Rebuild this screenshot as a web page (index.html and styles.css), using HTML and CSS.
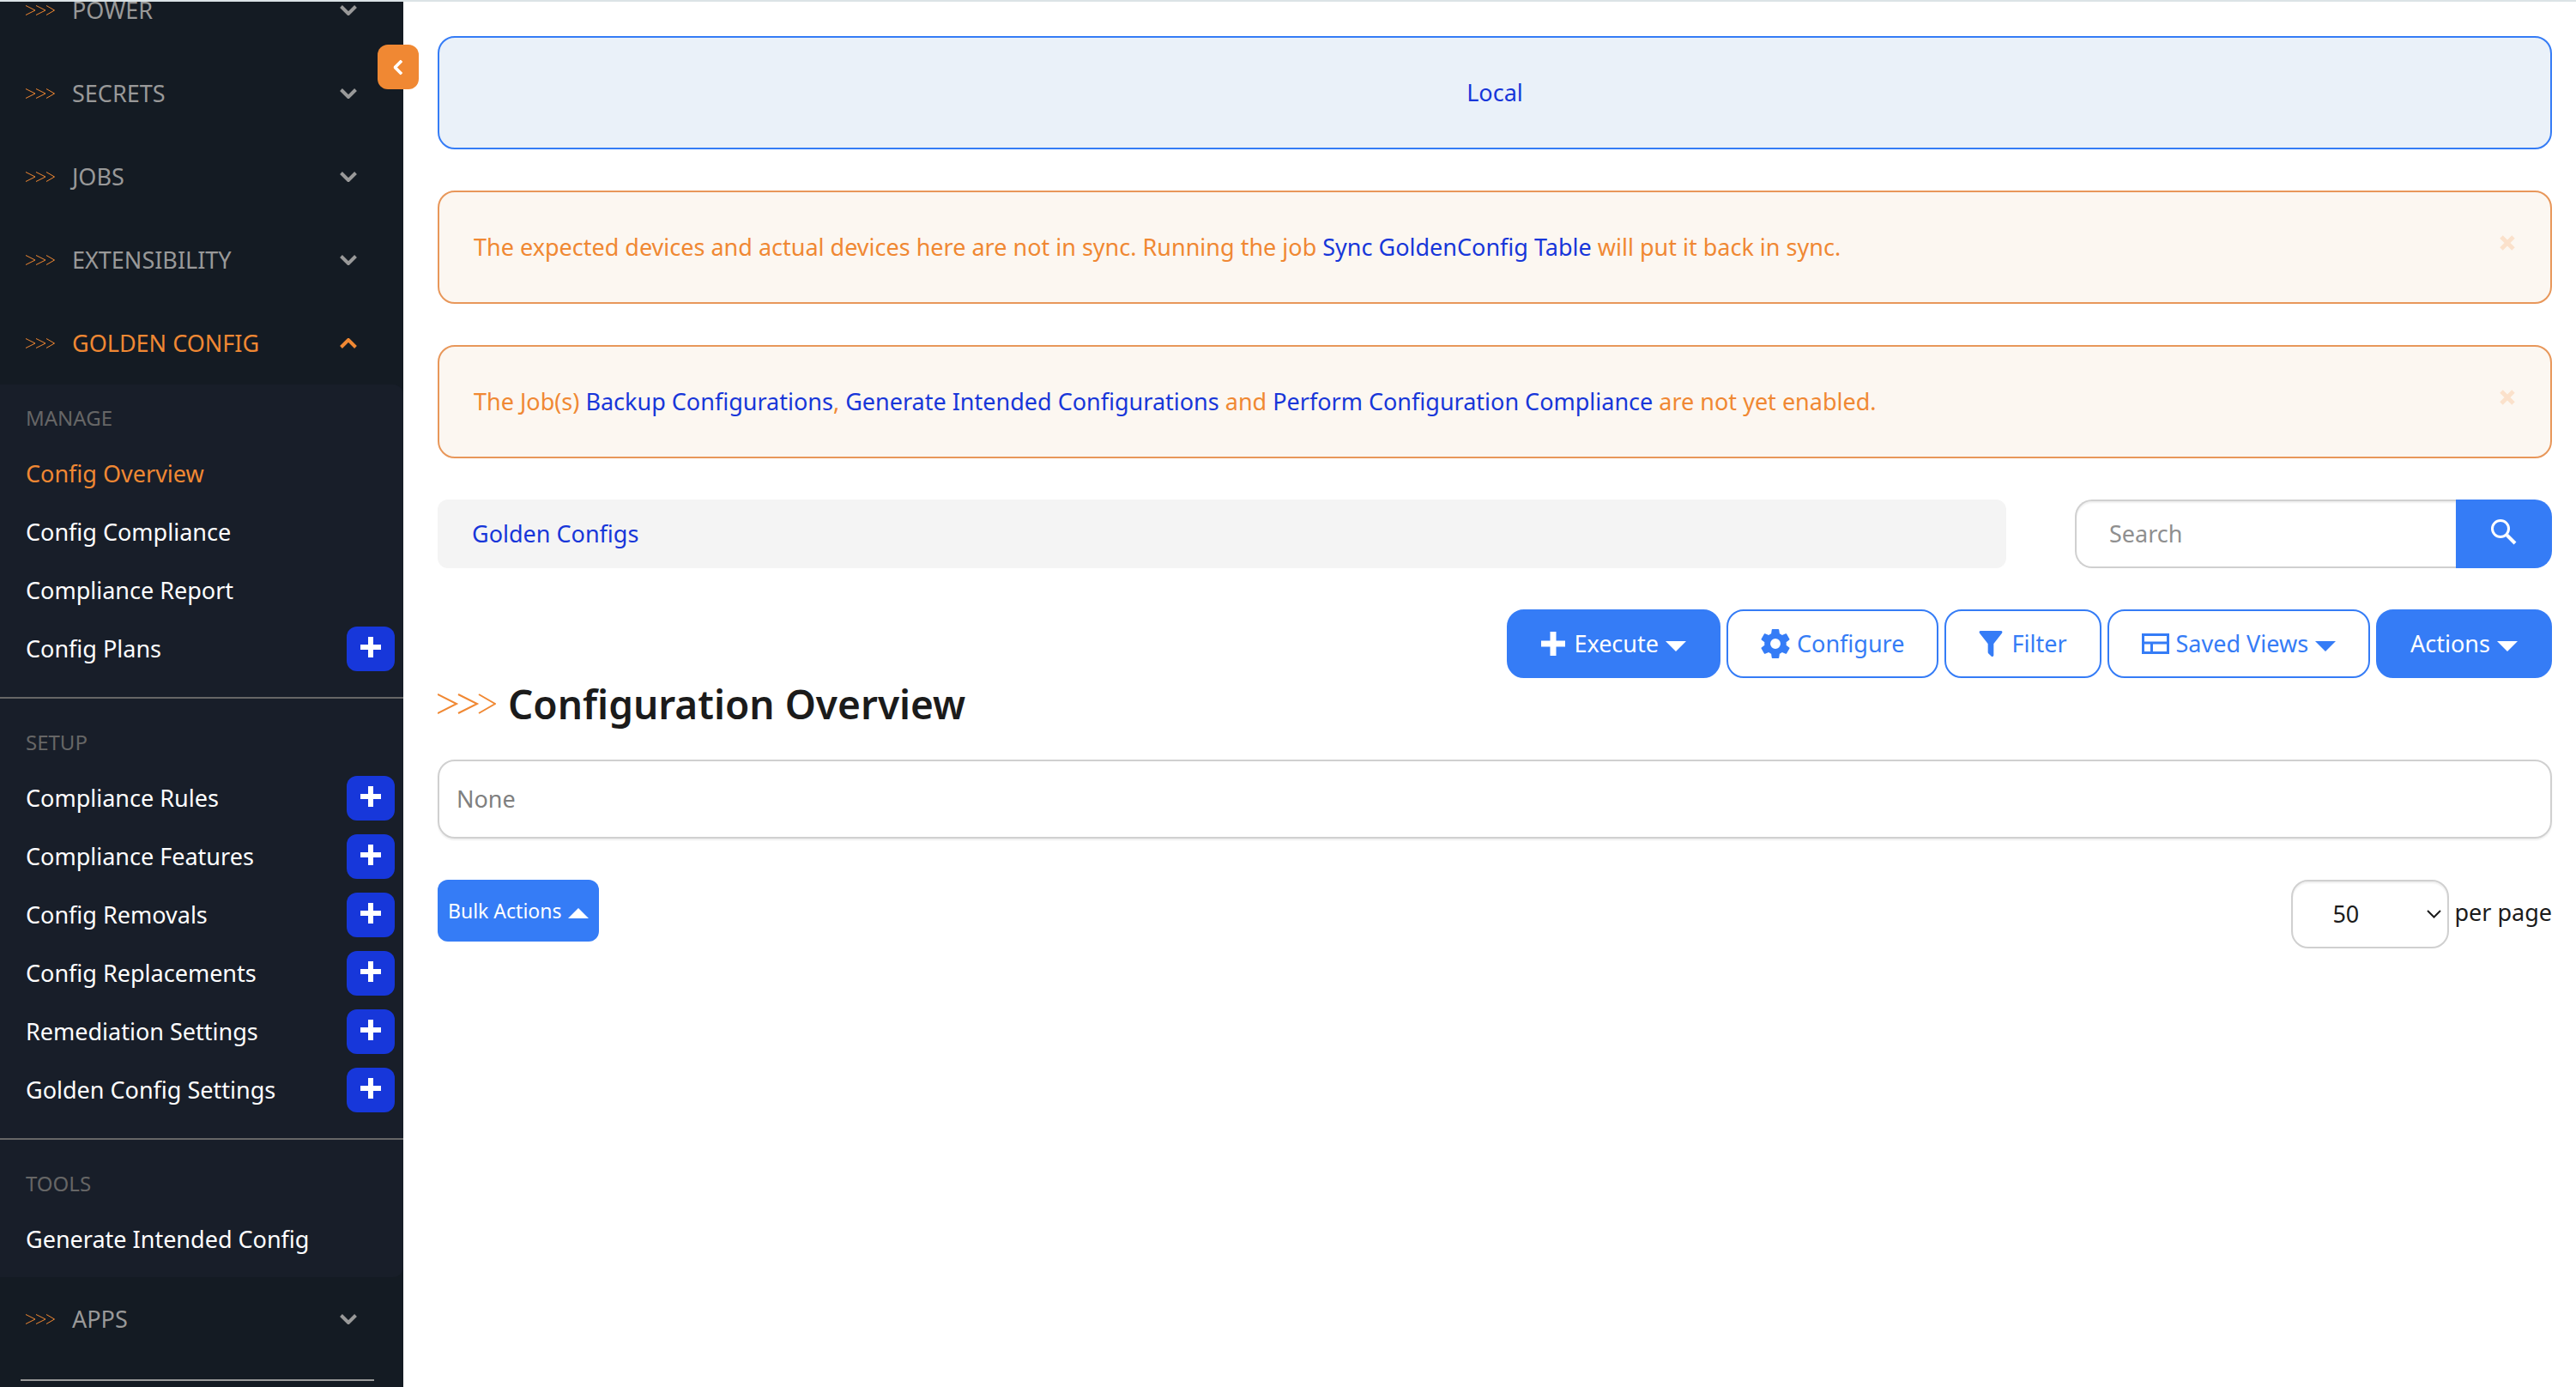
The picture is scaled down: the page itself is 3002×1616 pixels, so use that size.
FILE: index.html
```html
<!DOCTYPE html>
<html lang="en">
<head>
<meta charset="utf-8">
<title>Configuration Overview</title>
<link rel="stylesheet" href="styles.css">
</head>
<body>
<svg class="sprite" aria-hidden="true">
  <symbol id="arrows" viewBox="0 0 68 24"><path d="M0 1 22 12 0 23M24 1 46 12 24 23M48 1 67 12 48 23" fill="none" stroke="currentColor" stroke-width="2"/></symbol>
  <symbol id="chevron" viewBox="0 0 20 12"><path d="M1.500 1.500 10 10 18.500 1.500" fill="none" stroke="currentColor" stroke-width="4"/></symbol>
  <symbol id="chevron-thin" viewBox="0 0 17 10"><path d="M1 1 8.500 8.500 16 1" fill="none" stroke="currentColor" stroke-width="2"/></symbol>
  <symbol id="plus" viewBox="0 0 24 24"><path d="M9 0h6v9h9v6h-9v9H9v-9H0V9h9z" fill="currentColor"/></symbol>
  <symbol id="caret" viewBox="0 0 24 12"><path d="M0 0h24L12 12z" fill="currentColor"/></symbol>
  <symbol id="cog" viewBox="2 2 20 20"><path fill="currentColor" d="M12 15.500A3.500 3.500 0 0 1 8.500 12 3.500 3.500 0 0 1 12 8.500a3.500 3.500 0 0 1 3.500 3.500 3.500 3.500 0 0 1-3.500 3.500m7.430-2.530c.04-.32.07-.64.07-.97s-.03-.66-.07-1l2.110-1.630c.19-.15.24-.42.12-.64l-2-3.460c-.12-.22-.39-.31-.61-.22l-2.490 1c-.52-.39-1.060-.73-1.690-.98l-.37-2.650A.506.506 0 0 0 14 2h-4c-.25 0-.46.18-.5.42l-.37 2.650c-.63.25-1.170.59-1.690.98l-2.490-1c-.22-.09-.49 0-.61.22l-2 3.460c-.13.22-.07.49.12.64L4.570 11c-.04.34-.07.67-.07 1s.03.65.07.970l-2.110 1.660c-.19.15-.25.42-.12.64l2 3.460c.12.22.39.3.61.22l2.490-1.010c.52.4 1.060.74 1.690.99l.37 2.650c.04.24.25.42.5.42h4c.25 0 .46-.18.5-.42l.37-2.650c.63-.26 1.170-.59 1.690-.99l2.490 1.010c.22.08.49 0 .61-.22l2-3.460c.12-.22.07-.49-.12-.64z"/></symbol>
  <symbol id="filter" viewBox="4 3 16 18"><path fill="currentColor" d="M14 12v7.880c.04.3-.06.62-.29.830a.996.996 0 0 1-1.410 0l-2.010-2.010a.989.989 0 0 1-.29-.830V12h-.03L4.210 4.620a1 1 0 0 1 .17-1.400c.19-.14.4-.22.620-.22h14c.22 0 .430.080.620.220a1 1 0 0 1 .17 1.400L14.030 12z"/></symbol>
  <symbol id="views" viewBox="0 0 32 24"><path d="M1.500 1.500h29v21h-29zM1.500 11h29M11.500 11v11" fill="none" stroke="currentColor" stroke-width="3"/></symbol>
  <symbol id="search" viewBox="0 0 30 30"><path d="M18.500 18.500 28 28" stroke="currentColor" stroke-width="4" fill="none"/><circle cx="11" cy="11" r="9.500" stroke="currentColor" stroke-width="3" fill="none"/></symbol>
  <symbol id="close" viewBox="0 0 20 20"><path d="M3 3l14 14M17 3 3 17" stroke="currentColor" stroke-width="5" fill="none"/></symbol>
</svg>

<div class="app">
  <aside class="sidebar">
    <button class="toggle" type="button" aria-label="Collapse menu"><svg><use href="#chevron"/></svg></button>
    <nav class="menu">
      <button class="menu-item" type="button"><svg class="arrows"><use href="#arrows"/></svg><span>POWER</span><svg class="chevron"><use href="#chevron"/></svg></button>
      <button class="menu-item" type="button"><svg class="arrows"><use href="#arrows"/></svg><span>SECRETS</span><svg class="chevron"><use href="#chevron"/></svg></button>
      <button class="menu-item" type="button"><svg class="arrows"><use href="#arrows"/></svg><span>JOBS</span><svg class="chevron"><use href="#chevron"/></svg></button>
      <button class="menu-item" type="button"><svg class="arrows"><use href="#arrows"/></svg><span>EXTENSIBILITY</span><svg class="chevron"><use href="#chevron"/></svg></button>
      <button class="menu-item open" type="button"><svg class="arrows"><use href="#arrows"/></svg><span>GOLDEN CONFIG</span><svg class="chevron"><use href="#chevron"/></svg></button>
      <div class="submenu">
        <section class="group">
          <h2>MANAGE</h2>
          <ul>
            <li><a class="current" href="#">Config Overview</a></li>
            <li><a href="#">Config Compliance</a></li>
            <li><a href="#">Compliance Report</a></li>
            <li><a href="#">Config Plans</a><button class="add" type="button" aria-label="Add config plan"><svg><use href="#plus"/></svg></button></li>
          </ul>
        </section>
        <section class="group">
          <h2>SETUP</h2>
          <ul>
            <li><a href="#">Compliance Rules</a><button class="add" type="button" aria-label="Add compliance rule"><svg><use href="#plus"/></svg></button></li>
            <li><a href="#">Compliance Features</a><button class="add" type="button" aria-label="Add compliance feature"><svg><use href="#plus"/></svg></button></li>
            <li><a href="#">Config Removals</a><button class="add" type="button" aria-label="Add config removal"><svg><use href="#plus"/></svg></button></li>
            <li><a href="#">Config Replacements</a><button class="add" type="button" aria-label="Add config replacement"><svg><use href="#plus"/></svg></button></li>
            <li><a href="#">Remediation Settings</a><button class="add" type="button" aria-label="Add remediation setting"><svg><use href="#plus"/></svg></button></li>
            <li><a href="#">Golden Config Settings</a><button class="add" type="button" aria-label="Add golden config setting"><svg><use href="#plus"/></svg></button></li>
          </ul>
        </section>
        <section class="group">
          <h2>TOOLS</h2>
          <ul>
            <li><a href="#">Generate Intended Config</a></li>
          </ul>
        </section>
      </div>
      <button class="menu-item" type="button"><svg class="arrows"><use href="#arrows"/></svg><span>APPS</span><svg class="chevron"><use href="#chevron"/></svg></button>
      <hr>
    </nav>
  </aside>

  <main class="content">
    <div class="alert banner">Local</div>
    <div class="alert warning">
      <p>The expected devices and actual devices here are not in sync. Running the job <a href="#">Sync GoldenConfig Table</a> will put it back in sync.</p>
      <button class="close" type="button" aria-label="Dismiss"><svg><use href="#close"/></svg></button>
    </div>
    <div class="alert warning">
      <p>The Job(s) <a href="#">Backup Configurations</a>, <a href="#">Generate Intended Configurations</a> and <a href="#">Perform Configuration Compliance</a> are not yet enabled.</p>
      <button class="close" type="button" aria-label="Dismiss"><svg><use href="#close"/></svg></button>
    </div>

    <div class="top-row">
      <nav class="breadcrumb"><a href="#">Golden Configs</a></nav>
      <form class="search">
        <input type="text" placeholder="Search" aria-label="Search">
        <button type="button" aria-label="Submit search"><svg><use href="#search"/></svg></button>
      </form>
    </div>

    <div class="toolbar">
      <button class="btn primary" type="button"><svg class="i-plus"><use href="#plus"/></svg><span>Execute</span><svg class="caret"><use href="#caret"/></svg></button>
      <button class="btn" type="button"><svg class="i-cog"><use href="#cog"/></svg><span>Configure</span></button>
      <button class="btn" type="button"><svg class="i-filter"><use href="#filter"/></svg><span>Filter</span></button>
      <button class="btn" type="button"><svg class="i-views"><use href="#views"/></svg><span>Saved Views</span><svg class="caret"><use href="#caret"/></svg></button>
      <button class="btn primary" type="button"><span>Actions</span><svg class="caret"><use href="#caret"/></svg></button>
    </div>

    <h1><svg><use href="#arrows"/></svg>Configuration Overview</h1>
    <div class="panel">None</div>

    <div class="bottom-row">
      <button class="bulk" type="button">Bulk Actions<svg class="caret up"><use href="#caret"/></svg></button>
      <div class="pager">
        <span class="select-box">
          <select id="per-page"><option>50</option><option>100</option></select>
          <svg><use href="#chevron-thin"/></svg>
        </span>
        <label for="per-page">per page</label>
      </div>
    </div>
  </main>
</div>
</body>
</html>
```
FILE: styles.css
```css
* { box-sizing: border-box; }

body {
  margin: 0;
  background: #fff;
  color: #1b1b1b;
  font-family: "Noto Sans", "Open Sans", sans-serif;
  font-size: 27px;
  line-height: 40px;
}

button, input, select { font: inherit; cursor: pointer; }
button { border: 0; padding: 0; background: none; color: inherit; }
a { color: #1736d9; text-decoration: none; }
p, h1, h2, ul { margin: 0; padding: 0; }
ul { list-style: none; }
svg { display: block; flex: none; }
.sprite { position: absolute; width: 0; height: 0; }

.app {
  display: flex;
  min-height: 100vh;
  border-top: 2px solid #dbe3e6;
}

/* Sidebar */
.sidebar {
  position: relative;
  flex: none;
  width: 470px;
  background: #141b23;
}
.toggle {
  position: absolute;
  z-index: 1;
  top: 50px;
  right: -18px;
  width: 48px;
  height: 52px;
  border-radius: 12px;
  background: #f08833;
  color: #fff;
  display: grid;
  place-items: center;
}
.toggle svg { width: 18px; height: 11px; transform: rotate(90deg); }
.menu { overflow: hidden; }
.menu-item {
  display: flex;
  align-items: center;
  width: 100%;
  height: 97px;
  padding: 0 54px 0 30px;
  color: #999;
  text-align: left;
}
.menu-item:first-child { margin-top: -39px; }
.menu-item span { flex: 1; margin-left: 20px; }
.menu-item.open { color: #f08833; }
.open .chevron { transform: rotate(180deg); }
.arrows { width: 34px; height: 12px; color: #f08833; }
.chevron { width: 20px; height: 12px; }

.submenu { background: #181e29; border-radius: 0 12px 12px 0; }
.group { padding: 20px 0 22px; }
.group:first-child { padding-top: 8px; }
.group:last-child { padding-bottom: 10px; }
.group + .group { border-top: 2px solid #666; }
.group h2 {
  padding-left: 30px;
  color: #666;
  font-size: 24px;
  font-weight: 400;
  line-height: 62px;
}
.group li {
  display: flex;
  align-items: center;
  justify-content: space-between;
  height: 68px;
  padding: 0 10px 0 30px;
}
.group a { color: #fff; }
.group a.current { color: #f08833; }
.add {
  display: grid;
  place-items: center;
  width: 56px;
  height: 52px;
  padding-bottom: 4px;
  border-radius: 12px;
  background: #1737da;
  color: #fff;
}
.add svg { width: 24px; height: 24px; }
.menu hr {
  margin: 22px 34px 0 24px;
  border: 0;
  border-top: 2px solid #999;
}

/* Content */
.content { flex: 1; min-width: 0; padding: 40px 28px 40px 40px; }
.alert {
  display: flex;
  align-items: center;
  justify-content: space-between;
  min-height: 132px;
  margin-bottom: 48px;
  padding: 0 40px;
  border: 2px solid #e8975a;
  border-radius: 20px;
  background: #fcf7f1;
  color: #f08833;
}
.banner {
  justify-content: center;
  border-color: #357cf6;
  background: #eaf1f9;
  color: #1736d9;
}
.close { color: #fbe1cb; padding-bottom: 10px; }
.close svg { width: 20px; height: 20px; }

.top-row {
  display: grid;
  grid-template-columns: repeat(12, 1fr);
  column-gap: 80px;
}
.breadcrumb {
  grid-column: span 9;
  padding: 20px 40px;
  border-radius: 12px;
  background: #f4f4f4;
}
.search { grid-column: span 3; display: flex; }
.search input {
  flex: 1;
  min-width: 0;
  padding: 0 38px;
  border: 2px solid #d0d0d0;
  border-right: 0;
  border-radius: 20px 0 0 20px;
  box-shadow: inset 0 2px 2px #0001;
  outline: 0;
}
.search input::placeholder { color: #8f8f8f; opacity: 1; }
.search button {
  display: grid;
  place-items: center;
  width: 112px;
  padding-bottom: 4px;
  border-radius: 0 20px 20px 0;
  background: #357cf6;
  color: #fff;
}
.search svg { width: 30px; height: 30px; }

.toolbar {
  display: flex;
  justify-content: flex-end;
  gap: 7px;
  margin-top: 48px;
}
.btn {
  display: flex;
  align-items: center;
  gap: 8px;
  height: 80px;
  padding: 0 38px;
  border: 2px solid #357cf6;
  border-radius: 20px;
  color: #357cf6;
}
.btn.primary { background: #357cf6; color: #fff; }
.caret { width: 24px; height: 12px; margin-top: 6px; }
.caret.up { transform: rotate(180deg); }
.i-plus { width: 28px; height: 28px; margin-right: 2px; }
.i-cog { width: 34px; height: 34px; }
.i-filter { width: 28px; height: 30px; margin-right: 2px; }
.i-views { width: 32px; height: 24px; }

h1 {
  display: flex;
  align-items: center;
  gap: 14px;
  margin-bottom: 35px;
  font-size: 46px;
  font-weight: 600;
  line-height: 60px;
}
h1 svg { width: 68px; height: 24px; color: #f08833; }
.panel {
  padding: 24px 20px;
  border: 2px solid #d0d0d0;
  border-radius: 20px;
  box-shadow: 0 2px 2px #0001;
  color: #808080;
}

.bottom-row {
  display: flex;
  align-items: flex-start;
  justify-content: space-between;
  margin-top: 48px;
}
.bulk {
  display: flex;
  align-items: center;
  gap: 8px;
  height: 72px;
  padding: 0 12px;
  border-radius: 12px;
  background: #357cf6;
  color: #fff;
  font-size: 23px;
}
.pager { display: flex; align-items: center; gap: 6px; }
.pager label { padding-bottom: 4px; }
.select-box { position: relative; }
.select-box select {
  display: block;
  appearance: none;
  width: 184px;
  height: 80px;
  padding: 0 46px;
  border: 2px solid #d0d0d0;
  border-radius: 20px;
  background: #fff;
  box-shadow: inset 0 2px 2px #0001;
  color: #1b1b1b;
}
.select-box svg {
  position: absolute;
  right: 9px;
  top: 35px;
  width: 17px;
  height: 10px;
  pointer-events: none;
}
```
